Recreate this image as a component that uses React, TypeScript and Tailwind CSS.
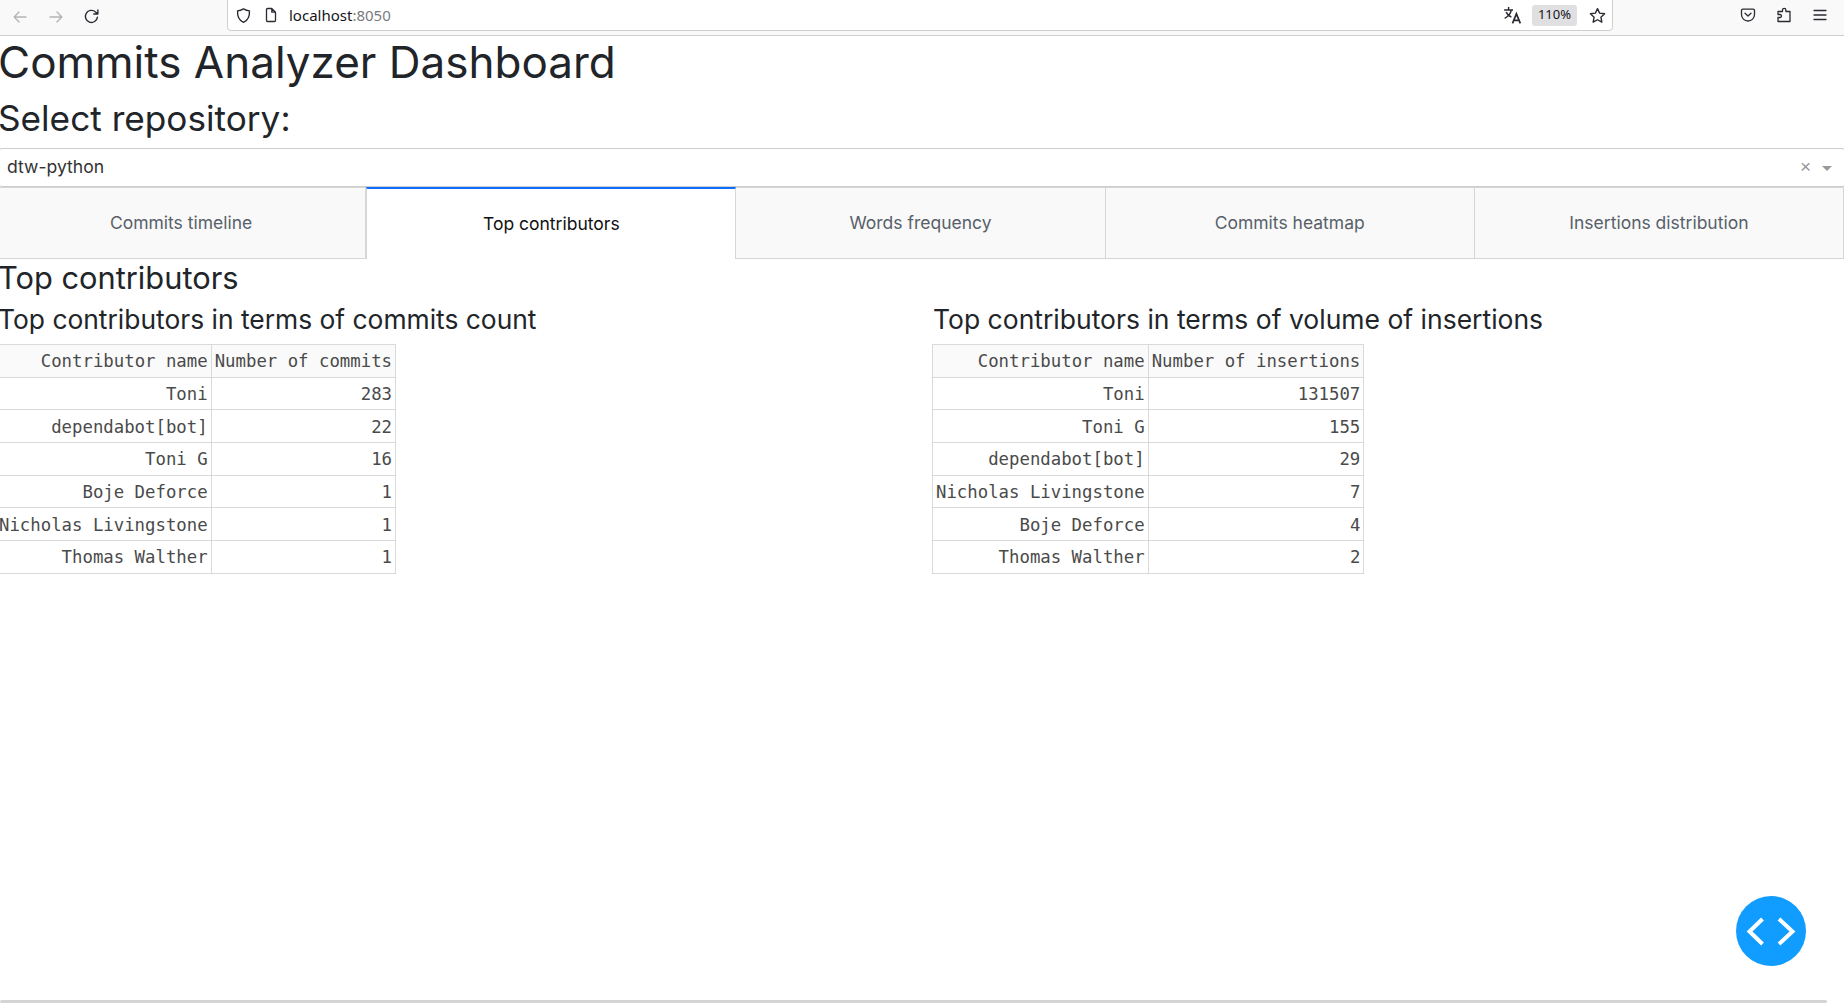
const commits = [
  ["Toni", "283"],
  ["dependabot[bot]", "22"],
  ["Toni G", "16"],
  ["Boje Deforce", "1"],
  ["Nicholas Livingstone", "1"],
  ["Thomas Walther", "1"],
];

const insertions = [
  ["Toni", "131507"],
  ["Toni G", "155"],
  ["dependabot[bot]", "29"],
  ["Nicholas Livingstone", "7"],
  ["Boje Deforce", "4"],
  ["Thomas Walther", "2"],
];

const tabs = ["Commits timeline", "Top contributors", "Words frequency", "Commits heatmap", "Insertions distribution"];

function Icon({ className, size = 16, children }: { className?: string; size?: number; children: React.ReactNode }) {
  return (
    <svg width={size} height={size} viewBox="0 0 16 16" fill="none" stroke="currentColor" strokeWidth="1.3" strokeLinecap="round" strokeLinejoin="round" className={className}>
      {children}
    </svg>
  );
}

function Browser() {
  return (
    <div className="flex h-[36px] shrink-0 items-start border-b border-[#cfcfcf] bg-[#f9f9fa] text-[#2b2a33]">
      <div className="flex w-[227px] shrink-0 items-center pt-[8px]">
        <Icon className="ml-[12px] text-[#b4b4b6]">
          <path d="M14 8H2.500M7 3 2.200 8 7 13" />
        </Icon>
        <Icon className="ml-[20px] text-[#b4b4b6]">
          <path d="M2 8h11.500M9 3l4.800 5L9 13" />
        </Icon>
        <Icon className="ml-[19px]" size={17}>
          <path d="M13.600 8.600A5.700 5.700 0 1 1 11.800 3.700L14 5.600M14 1.800v3.900h-3.900" />
        </Icon>
      </div>
      <div className="-mt-px flex h-[32px] w-[1386px] shrink-0 items-center rounded-b-[4px] border border-[#cfcfcf] bg-white">
        <Icon className="ml-[7px]" size={17}>
          <path d="M8 1.800c2 1.200 3.900 1.700 5.600 1.800.3 5.500-1.600 9.200-5.600 10.900C4 12.800 2.100 9.100 2.400 3.600 4.100 3.500 6 3 8 1.800Z" />
        </Icon>
        <Icon className="ml-[11px]">
          <path d="M3.500 2.500a1 1 0 0 1 1-1h4.300l3.700 3.700v8.300a1 1 0 0 1-1 1h-7a1 1 0 0 1-1-1ZM8.800 1.500v3.700h3.700" />
        </Icon>
        <span className="ml-[10px] font-['Noto_Sans',sans-serif] text-[15px] text-[#15141a]">
          localhost<span className="text-[#7a7a80]">:8050</span>
        </span>
        <div className="ml-auto flex items-center">
          <svg width="19" height="19" viewBox="0 0 17 17" fill="none" stroke="currentColor" strokeWidth="1.3" className="mr-[10px]">
            <path d="M1 3.500h8M5 1v2.500M7.500 3.500C6.800 7 4.500 9.500 1.500 11M2.800 5.500c.9 2 2.500 3.500 4.700 4.500" />
            <path d="M8.500 15.500 12 7l3.500 8.500M9.800 12.800h4.400" strokeWidth="1.500" />
          </svg>
          <span className="mr-[12px] flex h-[21px] w-[45px] items-center justify-center rounded-[3px] bg-[#e0e0e2] font-['Noto_Sans',sans-serif] text-[13px] text-[#15141a]">
            110%
          </span>
          <Icon className="mr-[6px]" size={17}>
            <path d="M8 1.500l2 4.300 4.700.6-3.500 3.200.9 4.700L8 12l-4.100 2.300.9-4.700L1.300 6.400 6 5.800Z" />
          </Icon>
        </div>
      </div>
      <div className="flex flex-1 items-center pt-[7px]">
        <Icon className="ml-[127px]">
          <path d="M2.800 2.200h10.400a1.300 1.300 0 0 1 1.300 1.300v4a6.500 6.500 0 0 1-13 0v-4a1.300 1.300 0 0 1 1.300-1.300ZM5 6.300l3 2.800 3-2.800" />
        </Icon>
        <Icon className="ml-[20px]">
          <path d="M2 14.500V10.500h2a1.500 1.500 0 0 0 0-3H2V4.500h4.500V3a1.700 1.700 0 0 1 3.400 0v1.500H14v10Z" />
        </Icon>
        <Icon className="ml-[20px]">
          <path d="M2 3.500h12M2 8h12M2 12.500h12" />
        </Icon>
      </div>
    </div>
  );
}

function Table({ head, rows, className }: { head: string[]; rows: string[][]; className?: string }) {
  return (
    <table className={`border-collapse font-['DejaVu_Sans_Mono',monospace] text-[17.340px] text-[#4a4a4a] ${className ?? ""}`}>
      <thead>
        <tr className="h-[32.700px] bg-[#fafafa]">
          {head.map((h) => (
            <th key={h} className="border border-[#d9d9d9] px-[3px] pt-[2px] text-right font-normal leading-none">
              {h}
            </th>
          ))}
        </tr>
      </thead>
      <tbody>
        {rows.map((r) => (
          <tr key={r[0]} className="h-[32.700px]">
            {r.map((c, i) => (
              <td key={i} className="border border-[#d9d9d9] px-[3px] pt-[2px] text-right leading-none">
                {c}
              </td>
            ))}
          </tr>
        ))}
      </tbody>
    </table>
  );
}

export default function App() {
  return (
    <div className="relative flex h-screen flex-col overflow-hidden bg-white font-['Inter',sans-serif] text-[#212529]">
      <Browser />

      <h1 className="-ml-[2px] text-[44px] leading-[52.800px]">Commits Analyzer Dashboard</h1>
      <h2 className="-ml-[2px] mt-[8px] text-[35.200px] leading-[42.200px]">Select repository:</h2>

      <div className="-mx-[2px] mt-[9px] flex h-[39px] items-center rounded-[4px] border border-[#cccccc] bg-white pl-[8px] pr-[13px] text-[17.600px] text-[#333333]">
        <span className="-mt-[1px]">dtw-python</span>
        <span className="ml-auto mr-[4px] font-['Liberation_Sans',sans-serif] text-[19px] text-[#999999]">×</span>
        <span className="ml-[7px] mt-[2px] h-0 w-0 border-x-[5px] border-t-[5px] border-x-transparent border-t-[#999999]" />
      </div>

      <div className="-ml-[3px] flex h-[72px] text-[17.500px]">
        {tabs.map((t, i) =>
          i === 1 ? (
            <div key={t} className="flex flex-1 items-center justify-center border-x border-t-2 border-x-[#d6d6d6] border-t-[#0d6efd] bg-white text-[#111111]">
              {t}
            </div>
          ) : (
            <div key={t} className={`flex flex-1 items-center justify-center border border-[#d6d6d6] bg-[#f9f9f9] text-[#586069] ${i === 2 ? "border-x-0 border-r" : "border-l-0"}`}>
              {t}
            </div>
          ),
        )}
      </div>

      <h3 className="-ml-[2px] text-[30.800px] leading-[37px]">Top contributors</h3>

      <div className="mt-[7px] flex">
        <div className="w-[932px] shrink-0">
          <h4 className="-ml-[2px] text-[26.400px] leading-[32px]">Top contributors in terms of commits count</h4>
          <Table className="-ml-[5px] mt-[9px]" head={["Contributor name", "Number of commits"]} rows={commits} />
        </div>
        <div>
          <h4 className="ml-[1px] text-[26.500px] leading-[32px]">Top contributors in terms of volume of insertions</h4>
          <Table className="mt-[9px]" head={["Contributor name", "Number of insertions"]} rows={insertions} />
        </div>
      </div>

      <div className="mb-[1px] mt-auto h-[3px] w-[1827px] rounded-full bg-[#d4d4d4]" />

      <button className="absolute left-[1736px] top-[896px] flex h-[70px] w-[70px] items-center justify-center rounded-full bg-[#119dff]">
        <svg width="50" height="30" viewBox="0 0 50 30" fill="none" stroke="white" strokeWidth="4">
          <path d="M16.500 3 3.500 15.500 16.500 28M33 3l13.500 12.500L33 28" />
        </svg>
      </button>
    </div>
  );
}
